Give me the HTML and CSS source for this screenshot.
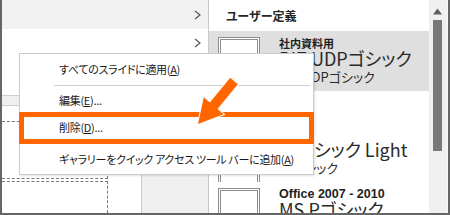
FILE: index.html
```html
<!DOCTYPE html>
<html lang="ja">
<head>
<meta charset="utf-8">
<link rel="stylesheet" href="styles.css">
</head>
<body>
<div class="window">
  <div class="left">
    <div class="row alt"><svg class="chev" width="8" height="10" viewBox="0 0 8 10"><polyline points="1,1 6,5 1,9"/></svg></div>
    <div class="row"><svg class="chev" width="8" height="10" viewBox="0 0 8 10"><polyline points="1,1 6,5 1,9"/></svg></div>
    <div class="band"></div>
    <div class="sorter">
      <div class="slide">
        <div class="ph ph1"></div>
        <div class="ph ph2"></div>
      </div>
      <div class="blank"></div>
      <div class="graycol"></div>
    </div>
  </div>
  <div class="right">
    <div class="gallery">
      <div class="group">ユーザー定義</div>
      <div class="item sel">
        <div class="thumb"><span>亜ア</span></div>
        <div class="info">
          <div class="name">社内資料用</div>
          <div class="head">BIZ UDPゴシック</div>
          <div class="body">BIZ UDPゴシック</div>
        </div>
      </div>
      <div class="group">Office</div>
      <div class="item">
        <div class="thumb"><span>亜ア</span></div>
        <div class="info">
          <div class="name">Office</div>
          <div class="head">游ゴシック Light</div>
          <div class="body">游ゴシック</div>
        </div>
      </div>
      <div class="item">
        <div class="thumb"><span>亜ア</span></div>
        <div class="info">
          <div class="name latin">Office 2007 - 2010</div>
          <div class="head">MS Pゴシック</div>
          <div class="body">MS Pゴシック</div>
        </div>
      </div>
    </div>
    <div class="scroll">
      <svg class="up" width="18" height="20" viewBox="0 0 18 20"><polygon points="4,14.5 8.5,8.5 13,14.5"/></svg>
      <div class="sthumb"></div>
    </div>
  </div>

  <div class="menu">
    <div class="mi mi1">すべてのスライドに適用(<u>A</u>)</div>
    <div class="msep"></div>
    <div class="mi mi2">編集(<u>E</u>)...</div>
    <div class="mi mi3">削除(<u>D</u>)...</div>
    <div class="mi mi4">ギャラリーをクイック アクセス ツール バーに追加(<u>A</u>)</div>
  </div>
  <div class="mark"></div>
  <svg class="arrow" width="450" height="215" viewBox="0 0 450 215">
    <polygon points="198,124 203.8,97.3 209.9,102.5 230.2,77.7 237.8,84.3 217.5,109.1 223.6,114.3"/>
  </svg>
</div>
</body>
</html>
```
FILE: styles.css
```css
html, body {
  margin: 0;
  padding: 0;
  background: #fff;
}

.window {
  position: relative;
  width: 450px;
  height: 215px;
  box-sizing: border-box;
  border-left: 2px solid #666;
  border-right: 2px solid #666;
  border-bottom: 2px solid #666;
  display: flex;
  overflow: hidden;
  background: #fff;
  font-family: "Noto Sans CJK JP", "Liberation Sans", sans-serif;
  color: #222;
}

/* left pane */
.left {
  width: 206px;
  flex: none;
  border-right: 1px solid #c9c9c9;
  display: flex;
  flex-direction: column;
}

.row {
  height: 29px;
  flex: none;
  display: flex;
  align-items: center;
  justify-content: flex-end;
  padding-right: 6px;
}

.row + .row {
  height: 28px;
}

.row.alt {
  background: #f2f2f2;
}

.chev polyline {
  fill: none;
  stroke: #555;
  stroke-width: 1.2;
}

.band {
  flex: none;
  margin-top: 38px;
  height: 9px;
  background: #efefef;
  border-top: 1px solid #cfcfcf;
  border-bottom: 1px solid #cfcfcf;
}

.sorter {
  flex: 1;
  display: flex;
}

.slide {
  width: 106px;
  flex: none;
  padding-top: 15px;
  display: flex;
  flex-direction: column;
}

.ph {
  border-top: 1px dashed #777;
  border-right: 1px dashed #777;
}

.ph1 {
  height: 56px;
  border-bottom: 1px dashed #777;
}

.ph2 {
  margin-top: 2px;
  flex: 1;
}

.blank {
  width: 33px;
  flex: none;
}

.graycol {
  flex: 1;
  background: #efefef;
  border-left: 1px solid #c9c9c9;
}

/* right pane */
.right {
  flex: 1;
  display: flex;
}

.gallery {
  width: 220px;
  flex: none;
  display: flex;
  flex-direction: column;
}

.group {
  flex: none;
  height: 31px;
  line-height: 31px;
  padding-left: 17px;
  font-size: 12px;
  font-weight: 700;
  color: #262626;
  font-feature-settings: "palt";
}

.item {
  flex: none;
  height: 60px;
  box-sizing: border-box;
  padding: 6px 0 0 9px;
  display: flex;
  overflow: hidden;
}

.item.sel {
  background: #dfdfdf;
}

.thumb {
  width: 42px;
  height: 60px;
  flex: none;
  box-sizing: border-box;
  border: 1px solid #8c8c8c;
  box-shadow: inset 0 0 0 1px #fff, inset 0 0 0 2px #8c8c8c;
  background: #fff;
  padding-top: 23px;
  text-align: center;
  font-size: 16px;
  line-height: 1;
  white-space: nowrap;
  overflow: hidden;
}

.info {
  margin-left: 19px;
  white-space: nowrap;
  font-feature-settings: "palt";
}

.name {
  font-size: 11px;
  font-weight: 700;
  line-height: 12px;
  color: #1e1e1e;
}

.name.latin {
  font-family: "Liberation Sans", sans-serif;
  font-size: 12.5px;
}

.head {
  font-size: 18px;
  line-height: 18px;
  color: #2a2a2a;
}

.body {
  margin-top: 2px;
  font-size: 13px;
  line-height: 16px;
  color: #2a2a2a;
}

.scroll {
  width: 18px;
  flex: none;
  background: #f0f0f0;
  border-right: 1px solid #f8f8f8;
  display: flex;
  flex-direction: column;
}

.up polygon {
  fill: #606060;
}

.sthumb {
  margin-left: 4px;
  width: 9px;
  height: 131px;
  background: #787878;
}

/* context menu overlay */
.menu {
  position: absolute;
  left: 17px;
  top: 53px;
  width: 293px;
  height: 120px;
  background: #fff;
  border: 1px solid #cccccc;
  box-shadow: 1px 1px 2px rgba(0, 0, 0, 0.12);
  display: flex;
  flex-direction: column;
  font-size: 11px;
  letter-spacing: -0.3px;
  font-feature-settings: "palt";
  color: #1a1a1a;
}

.mi {
  padding-left: 39px;
  white-space: nowrap;
  display: flex;
  align-items: center;
}

.mi u {
  text-underline-offset: 1px;
}

.mi1 { height: 31px; }
.mi2 { height: 28px; }
.mi3 { height: 28px; }
.mi4 { height: 30px; margin-top: 3px; }

.msep {
  height: 1px;
  margin: 0 3px 0 34px;
  background: #cfcfcf;
}

/* annotation overlay */
.mark {
  position: absolute;
  left: 17px;
  top: 112px;
  width: 295px;
  height: 32px;
  box-sizing: border-box;
  border: 5px solid #ff6600;
}

.arrow {
  position: absolute;
  left: -2px;
  top: 0;
  pointer-events: none;
}

.arrow polygon {
  fill: #ff6600;
  stroke: #fff;
  stroke-width: 2;
  paint-order: stroke;
  stroke-linejoin: miter;
}
```
